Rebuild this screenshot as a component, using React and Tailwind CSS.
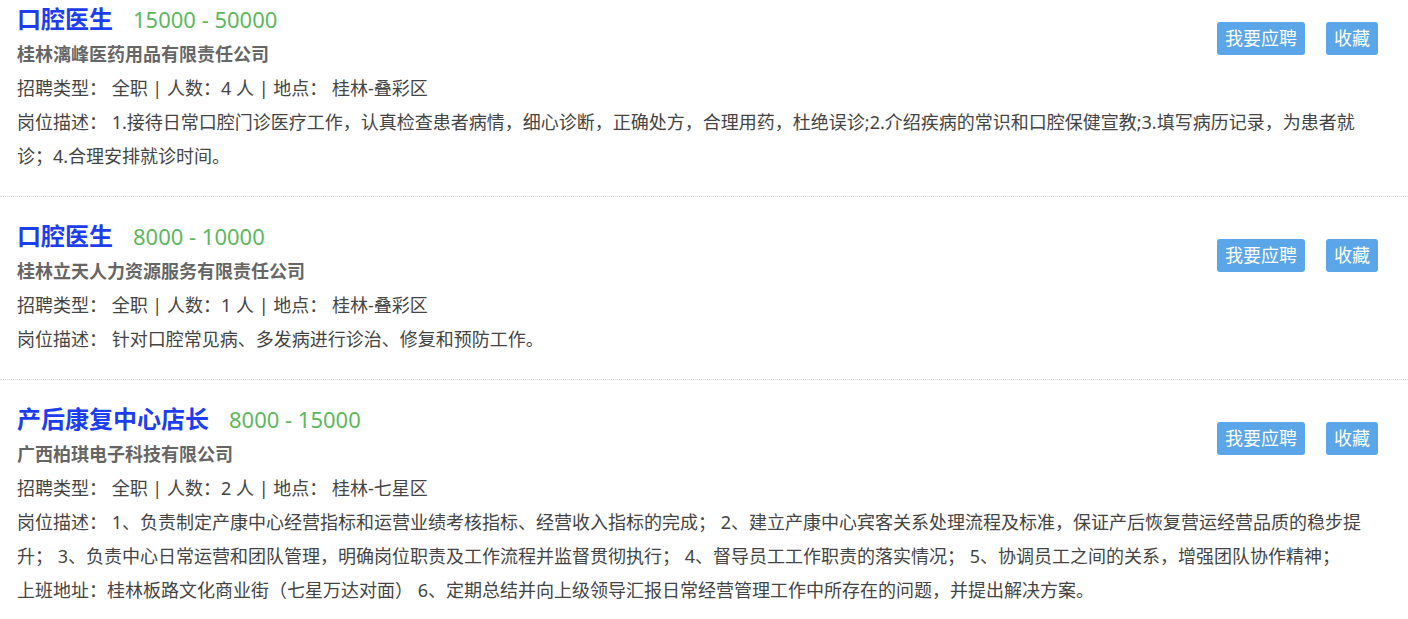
import React from 'react';

// job listings shown on the page
const jobs = [
  {
    title: '口腔医生',
    salary: '15000 - 50000',
    company: '桂林漓峰医药用品有限责任公司',
    count: 4,
    place: '桂林-叠彩区',
    desc: ['1.接待日常口腔门诊医疗工作，认真检查患者病情，细心诊断，正确处方，合理用药，杜绝误诊;2.介绍疾病的常识和口腔保健宣教;3.填写病历记录，为患者就诊；4.合理安排就诊时间。'],
  },
  {
    title: '口腔医生',
    salary: '8000 - 10000',
    company: '桂林立天人力资源服务有限责任公司',
    count: 1,
    place: '桂林-叠彩区',
    desc: ['针对口腔常见病、多发病进行诊治、修复和预防工作。'],
  },
  {
    title: '产后康复中心店长',
    salary: '8000 - 15000',
    company: '广西柏琪电子科技有限公司',
    count: 2,
    place: '桂林-七星区',
    desc: [
      '1、负责制定产康中心经营指标和运营业绩考核指标、经营收入指标的完成； 2、建立产康中心宾客关系处理流程及标准，保证产后恢复营运经营品质的稳步提升； 3、负责中心日常运营和团队管理，明确岗位职责及工作流程并监督贯彻执行； 4、督导员工工作职责的落实情况； 5、协调员工之间的关系，增强团队协作精神；',
      '上班地址：桂林板路文化商业街（七星万达对面） 6、定期总结并向上级领导汇报日常经营管理工作中所存在的问题，并提出解决方案。',
    ],
  },
];

function JobItem({ job, first }) {
  return (
    <div
      className={
        'pl-[17px] pr-[18px] pb-[23px] border-b border-dotted border-[#d6d6d6] ' +
        (first ? 'pt-[2px]' : 'pt-[22px]')
      }
    >
      <div className="flex justify-between">
        <div>
          <div className="flex items-baseline h-[33px] leading-[33px] mb-[2px]">
            <span className="text-[24px] font-bold text-[#1d3ef0]">{job.title}</span>
            <span className="ml-5 text-[22px] text-[#5cb85c]">{job.salary}</span>
          </div>
          <div className="text-[18px] font-bold leading-[34px] text-[#666]">{job.company}</div>
          <div className="text-[18px] leading-[34px] text-[#444]">
            招聘类型： 全职 | 人数：{job.count} 人 | 地点： {job.place}
          </div>
        </div>
        <div className="flex items-start gap-[21px] pt-[20px] mr-[12px]">
          <button
            type="button"
            className="h-[33px] px-2 rounded-[3px] bg-[#5ba6e8] text-white text-[18px] leading-[33px]"
          >
            我要应聘
          </button>
          <button
            type="button"
            className="h-[33px] px-2 rounded-[3px] bg-[#5ba6e8] text-white text-[18px] leading-[33px]"
          >
            收藏
          </button>
        </div>
      </div>
      <p className="text-[18px] leading-[34px] text-[#444]">
        岗位描述： {job.desc[0]}
        {job.desc.length > 1 && (
          <>
            <br />
            {job.desc[1]}
          </>
        )}
      </p>
    </div>
  );
}

export default function App() {
  return (
    <div
      className="w-[1408px] h-[619px] overflow-hidden bg-white"
      style={{ fontFamily: '"Noto Sans", "Noto Sans CJK SC", sans-serif' }}
    >
      {jobs.map((job, i) => (
        <JobItem key={i} job={job} first={i === 0} />
      ))}
    </div>
  );
}
